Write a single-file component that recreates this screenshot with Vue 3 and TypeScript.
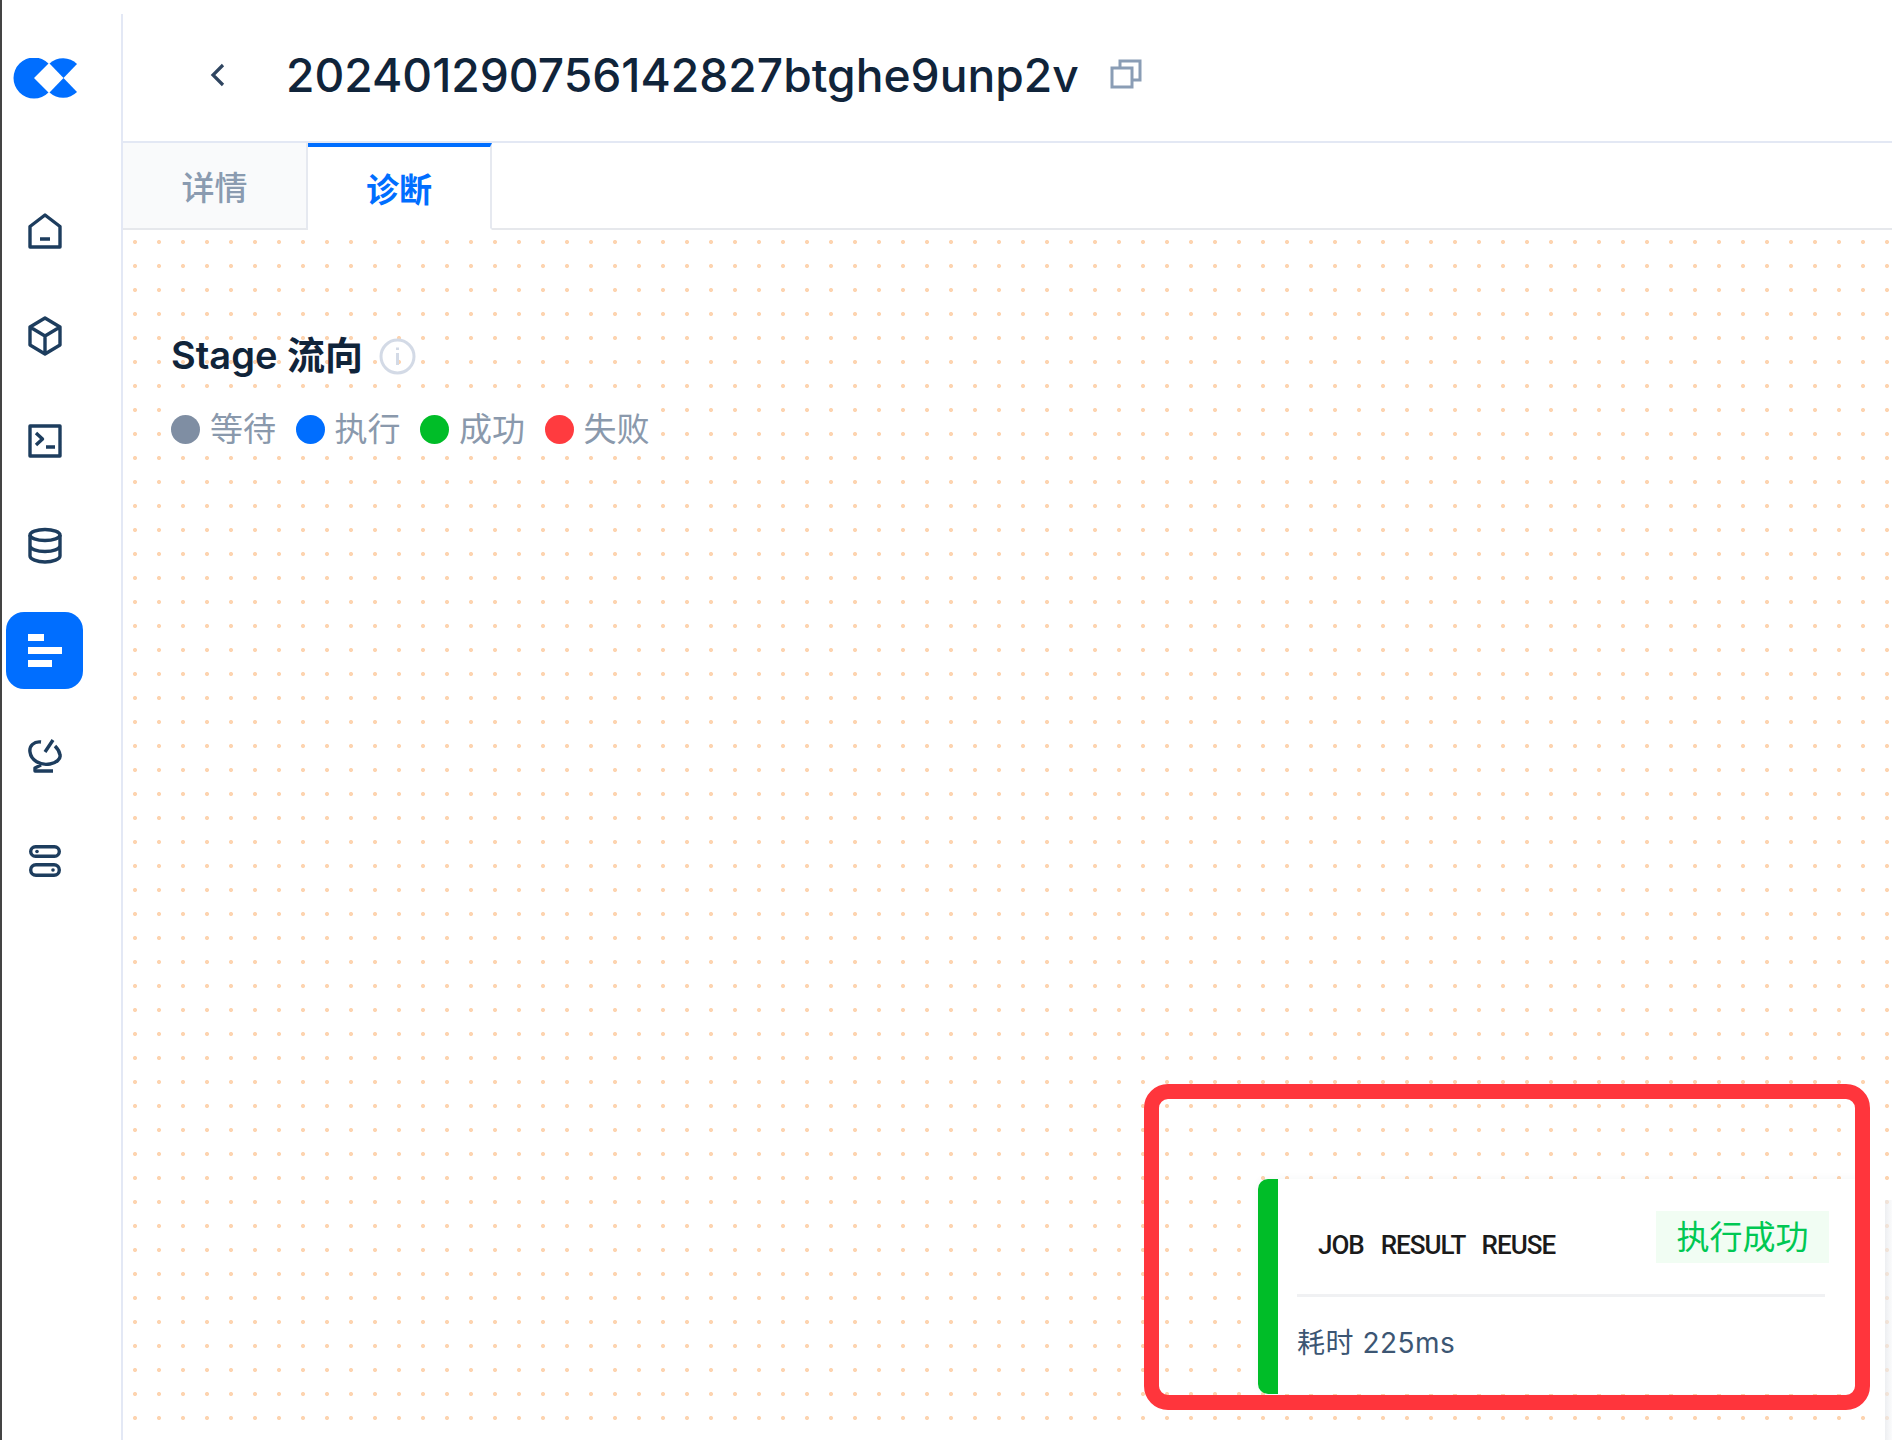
<script setup lang="ts">
const legend = [
  { label: "等待", color: "#7f8ea3" },
  { label: "执行", color: "#006eff" },
  { label: "成功", color: "#00bd28" },
  { label: "失败", color: "#ff3b3f" },
];
</script>

<template>
  <div class="app">
    <aside class="sidebar">
      <svg class="logo" width="64" height="42" viewBox="12 58 64 42">
        <path d="M33 78 L47.5 63.5 A20.5 20.5 0 1 0 47.5 92.5 Z" fill="#006eff" />
        <path d="M48.5 63.5 A20 20 0 0 1 76 64 L62.5 78 Z" fill="#006eff" />
        <path d="M48.5 92.5 A20 20 0 0 0 76 92 L62.5 78 Z" fill="#006eff" />
      </svg>
      <nav class="nav">
        <div class="nav-item">
          <svg width="36" height="38" viewBox="0 0 36 38">
            <path d="M3 14.5 L18 3 L33 14.5 V35 H3 Z M13 27 H23" />
          </svg>
        </div>
        <div class="nav-item">
          <svg width="36" height="40" viewBox="0 0 36 40">
            <path d="M18 2 L33 11 V29 L18 38 L3 29 V11 Z M3 11 L18 20 L33 11 M18 20 V38" />
          </svg>
        </div>
        <div class="nav-item">
          <svg width="36" height="36" viewBox="0 0 36 36">
            <path d="M3 3 H33 V33 H3 Z M9 10 L15.5 16 L9 22 M19 24 H28" />
          </svg>
        </div>
        <div class="nav-item">
          <svg width="36" height="38" viewBox="0 0 36 38">
            <ellipse cx="18" cy="8" rx="15" ry="5.5" />
            <path d="M3 8 V29 C3 32 10 35 18 35 C26 35 33 32 33 29 V8 M3 18.5 C3 22 10 24.5 18 24.5 C26 24.5 33 22 33 18.5" />
          </svg>
        </div>
        <div class="nav-item active">
          <span class="bars">
            <i class="bar-a"></i>
            <i class="bar-b"></i>
            <i class="bar-c"></i>
          </span>
        </div>
        <div class="nav-item">
          <svg width="36" height="36" viewBox="0 0 36 36">
            <path d="M14 4 C7 3 2 8 3 14 C4 22 13 28 23 26 C29 25 34 21 33 17 C32.5 13 30 10 28 8 M26 2 L18 14 M14 27 L8 30 V33 H26" />
          </svg>
        </div>
        <div class="nav-item">
          <svg width="36" height="36" viewBox="0 0 36 36">
            <rect x="3.7" y="3.7" width="28.6" height="9.6" rx="4.8" />
            <rect x="3.7" y="21.7" width="28.6" height="10.6" rx="5.3" />
            <circle class="solid" cx="10" cy="8.5" r="1.8" />
            <circle class="solid" cx="26" cy="27" r="1.8" />
          </svg>
        </div>
      </nav>
    </aside>

    <main class="main">
      <header class="header">
        <svg class="back" width="16" height="24" viewBox="0 0 16 24">
          <path d="M13 2 L3 12 L13 22" />
        </svg>
        <h1 class="title">202401290756142827btghe9unp2v</h1>
        <svg class="copy" width="32" height="32" viewBox="0 0 32 32">
          <rect x="2" y="10" width="20" height="19" />
          <path d="M10 10 V3 H30 V22 H22" />
        </svg>
      </header>

      <div class="tabs">
        <div class="tab">详情</div>
        <div class="tab current">诊断</div>
      </div>

      <section class="canvas">
        <div class="stage-title">
          <span>Stage 流向</span>
          <svg width="37" height="37" viewBox="0 0 37 37">
            <circle cx="18.5" cy="18.5" r="16.5" />
            <path d="M18.5 15 V27 M18.5 9.5 V12" />
          </svg>
        </div>
        <div class="legend">
          <div v-for="item in legend" :key="item.label" class="legend-item">
            <i class="dot" :style="{ background: item.color }"></i>
            <span>{{ item.label }}</span>
          </div>
        </div>

        <div class="node">
          <div class="node-head">
            <span class="node-name">JOB RESULT REUSE</span>
            <span class="node-tag">执行成功</span>
          </div>
          <div class="node-foot">耗时 225ms</div>
        </div>
        <div class="next-node"></div>
        <div class="highlight"></div>
      </section>
    </main>
  </div>
</template>

<style>
html,
body {
  margin: 0;
  height: 1440px;
  overflow: hidden;
  background: #fff;
}
</style>

<style scoped>
.app {
  display: flex;
  height: 1440px;
  font-family: Inter, "Noto Sans CJK SC", sans-serif;
  border-left: 2px solid #444;
  box-sizing: border-box;
}

.sidebar {
  width: 119px;
  flex-shrink: 0;
  position: relative;
  display: flex;
  flex-direction: column;
  padding-left: 4px;
  box-sizing: border-box;
}

.sidebar::after {
  content: "";
  position: absolute;
  top: 14px;
  bottom: 0;
  right: -2px;
  width: 2px;
  background: #e3e8f5;
}

.logo {
  display: block;
  margin: 58px 0 0 7px;
}

.nav {
  display: flex;
  flex-direction: column;
  margin-top: 92px;
}

.nav-item {
  width: 77px;
  height: 77px;
  margin-bottom: 28px;
  border-radius: 18px;
  display: flex;
  align-items: center;
  justify-content: center;
}

.nav-item svg {
  fill: none;
  stroke: #1d3d5e;
  stroke-width: 3.4;
  stroke-linejoin: round;
}

.nav-item .solid {
  fill: #1d3d5e;
  stroke: none;
}

.nav-item.active {
  background: #006eff;
}

.bars {
  display: flex;
  flex-direction: column;
  gap: 6px;
  width: 34px;
}

.bars i {
  display: block;
  height: 7px;
  background: #fff;
}

.bar-a {
  width: 16px;
}

.bar-b {
  width: 34px;
}

.bar-c {
  width: 24px;
}

.main {
  flex: 1;
  min-width: 0;
  margin-left: 2px;
  display: flex;
  flex-direction: column;
}

.header {
  height: 143px;
  flex-shrink: 0;
  box-sizing: border-box;
  border-bottom: 2px solid #e3e8f4;
  display: flex;
  align-items: center;
  padding: 8px 0 0 87px;
}

.back {
  fill: none;
  stroke: #2f4560;
  stroke-width: 3.2;
}

.title {
  margin: 0 0 0 60px;
  font-size: 46.2px;
  font-weight: 500;
  line-height: 60px;
  color: #10243a;
}

.copy {
  margin: -2px 0 0 31px;
  fill: none;
  stroke: #8a9db5;
  stroke-width: 3;
}

.tabs {
  height: 87px;
  flex-shrink: 0;
  box-sizing: border-box;
  display: flex;
  border-bottom: 2px solid #e6e8ec;
}

.tab {
  width: 184px;
  height: 87px;
  box-sizing: border-box;
  display: flex;
  align-items: center;
  justify-content: center;
  background: #f9fafb;
  border-right: 2px solid #e6e9f0;
  border-bottom: 2px solid #e6e8ec;
  color: #8a9bb0;
  font-size: 33px;
  font-weight: 500;
}

.tab:first-child {
  width: 185px;
}

.tab.current {
  background: #fff;
  border-top: 4px solid #006eff;
  border-bottom-color: #fff;
  color: #006eff;
  font-weight: 600;
}

.canvas {
  flex: 1;
  position: relative;
  padding: 0 48px;
  background-color: #fff;
  background-image: radial-gradient(circle at center, #fdd4b0 1.6px, transparent 2.4px);
  background-size: 24px 24px;
  overflow: hidden;
}

.stage-title {
  display: flex;
  align-items: center;
  gap: 16px;
  height: 44px;
  margin-top: 100px;
  font-size: 38px;
  font-weight: 600;
  color: #10243a;
}

.stage-title svg {
  margin-top: 8px;
  fill: none;
  stroke: #d3dae6;
  stroke-width: 3;
}

.legend {
  display: inline-flex;
  gap: 19.5px;
  margin-top: 33px;
  background: #fff;
  font-size: 33px;
  line-height: 44px;
  color: #8a99ac;
}

.legend-item {
  display: flex;
  align-items: center;
  gap: 10px;
}

.dot {
  display: block;
  width: 29px;
  height: 29px;
  border-radius: 50%;
}

.node {
  position: absolute;
  left: 1135px;
  top: 949px;
  width: 600px;
  height: 215px;
  box-sizing: border-box;
  background: #fff;
  border-left: 20px solid #00bd28;
  border-radius: 10px 0 0 10px;
  box-shadow: 0 0 8px rgba(30, 50, 80, 0.05);
  padding-left: 19px;
}

.node-head {
  height: 118px;
  width: 528px;
  box-sizing: border-box;
  border-bottom: 3px solid #f0f1f3;
  position: relative;
  display: flex;
  align-items: flex-start;
  justify-content: space-between;
  padding: 32px 0 0 21px;
}

.node-name {
  margin-top: 18px;
  font-family: Roboto, sans-serif;
  font-size: 26px;
  font-weight: 500;
  letter-spacing: -1px;
  word-spacing: 11.5px;
  line-height: 32px;
  color: #1b1b1b;
}

.node-tag {
  width: 173px;
  height: 52px;
  margin-right: -4px;
  background: #f1fdf3;
  color: #00c853;
  font-size: 33px;
  line-height: 52px;
  text-align: center;
}

.node-foot {
  margin-top: 28px;
  font-size: 28px;
  letter-spacing: 0.5px;
  line-height: 36px;
  color: #3c5673;
}

.next-node {
  position: absolute;
  right: 0;
  top: 970px;
  bottom: 0;
  width: 7px;
  background: linear-gradient(to right, rgba(230, 232, 236, 0.7), rgba(246, 247, 249, 0.5));
}

.highlight {
  position: absolute;
  left: 1021px;
  top: 854px;
  width: 726px;
  height: 326px;
  box-sizing: border-box;
  border: 15px solid #ff353c;
  border-radius: 24px;
}
</style>
